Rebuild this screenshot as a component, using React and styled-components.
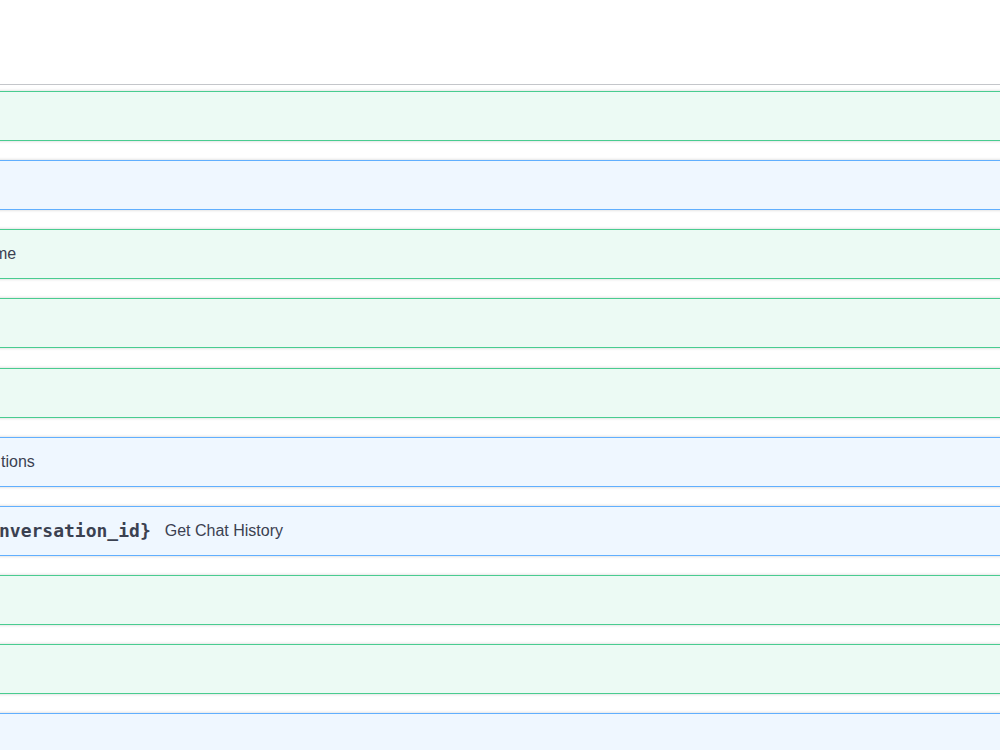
import React from "react";
import styled, { createGlobalStyle, css } from "styled-components";

const GlobalStyle = createGlobalStyle`
  html, body {
    margin: 0;
    padding: 0;
    background: #ffffff;
    overflow: hidden;
  }
  body {
    font-family: "Liberation Sans", Arial, sans-serif;
    color: #3b4151;
  }
`;

const METHOD = {
  post: { border: "#49cc90", bg: "rgba(73, 204, 144, 0.1)" },
  get: { border: "#61affe", bg: "rgba(97, 175, 254, 0.1)" },
};

const Page = styled.div`
  width: 1000px;
  height: 750px;
  overflow: hidden;
`;

const TagHeader = styled.div`
  height: 84px;
  border-bottom: 1px solid rgba(59, 65, 81, 0.3);
`;

const OpList = styled.div`
  padding-top: 6px;
  display: flex;
  flex-direction: column;
  gap: 19.15px;
`;

const Opblock = styled.div`
  box-sizing: border-box;
  height: 50px;
  margin: 0 -4px;
  border: 1px solid ${(p) => METHOD[p.$method].border};
  background: ${(p) => METHOD[p.$method].bg};
  box-shadow: 0 0 3px rgba(0, 0, 0, 0.19);
  flex-shrink: 0;
`;

const Summary = styled.div`
  height: 100%;
  display: flex;
  align-items: center;
  padding-left: 4px;
  overflow: hidden;
  white-space: nowrap;
`;

const Path = styled.span`
  font-family: "DejaVu Sans Mono", monospace;
  font-weight: 700;
  font-size: 18px;
  color: #3b4151;
  margin-left: ${(p) => p.$offset || 0}px;
  padding-right: 14px;
`;

const Description = styled.span`
  font-family: "Liberation Sans", Arial, sans-serif;
  font-size: 16px;
  color: #3b4151;
  ${(p) =>
    p.$offset != null &&
    css`
      margin-left: ${p.$offset}px;
    `}
`;

const ops = [
  { method: "post" },
  { method: "get" },
  { method: "post", desc: "me", descOffset: -7 },
  { method: "post" },
  { method: "post" },
  { method: "get", desc: "tions", descOffset: 0 },
  { method: "get", path: "nversation_id}", pathOffset: -2, desc: "Get Chat History" },
  { method: "post" },
  { method: "post" },
  { method: "get" },
];

export default function App() {
  return (
    <>
      <GlobalStyle />
      <Page>
        <TagHeader />
        <OpList>
          {ops.map((op, i) => (
            <Opblock key={i} $method={op.method}>
              <Summary>
                {op.path && <Path $offset={op.pathOffset}>{op.path}</Path>}
                {op.desc && (
                  <Description $offset={op.descOffset}>{op.desc}</Description>
                )}
              </Summary>
            </Opblock>
          ))}
        </OpList>
      </Page>
    </>
  );
}
